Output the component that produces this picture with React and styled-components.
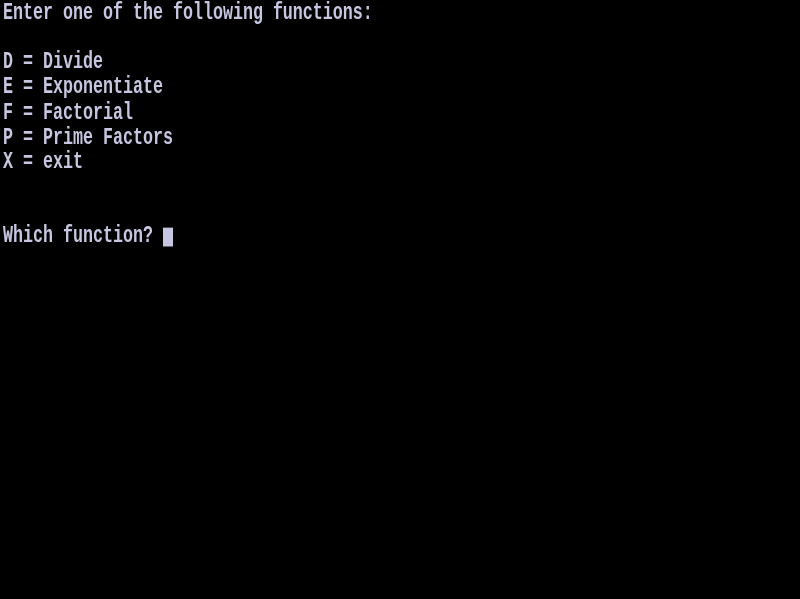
import React from 'react'
import styled, { createGlobalStyle } from 'styled-components'

const GlobalStyle = createGlobalStyle`
    html, body {
        margin: 0;
        padding: 0;
        background: #000;
    }
    #root {
        min-height: 100vh;
        background: #000;
    }
`

const Screen = styled.div`
    width: 800px;
    height: 599px;
    background: #000;
    overflow: hidden;
`

// the old terminal font is tall and narrow, so stretch a mono font vertically
const Console = styled.div`
    padding: 0 0 0 3px;
    transform: scaleY(1.45);
    transform-origin: top left;
    font-family: "Liberation Mono", "DejaVu Sans Mono", monospace;
    font-weight: bold;
    font-size: 16.67px;
    line-height: 17.15px;
    color: #c6c6e0;
    white-space: pre;
    filter: blur(0.35px);
`

const Line = styled.div`
    height: 17.15px;
`

const Cursor = styled.span`
    display: inline-block;
    width: 10px;
    height: 13px;
    vertical-align: -3px;
    background: #c6c6e0;
`

const menu = [
    'D = Divide',
    'E = Exponentiate',
    'F = Factorial',
    'P = Prime Factors',
    'X = exit',
]

function App() {
  return (
    <>
      <GlobalStyle />
      <Screen>
        <Console>
          <Line>Enter one of the following functions:</Line>
          <Line />
          {menu.map(m => (
            <Line key={m}>{m}</Line>
          ))}
          <Line />
          <Line />
          <Line>Which function? <Cursor /></Line>
        </Console>
      </Screen>
    </>
  )
}

export default App
